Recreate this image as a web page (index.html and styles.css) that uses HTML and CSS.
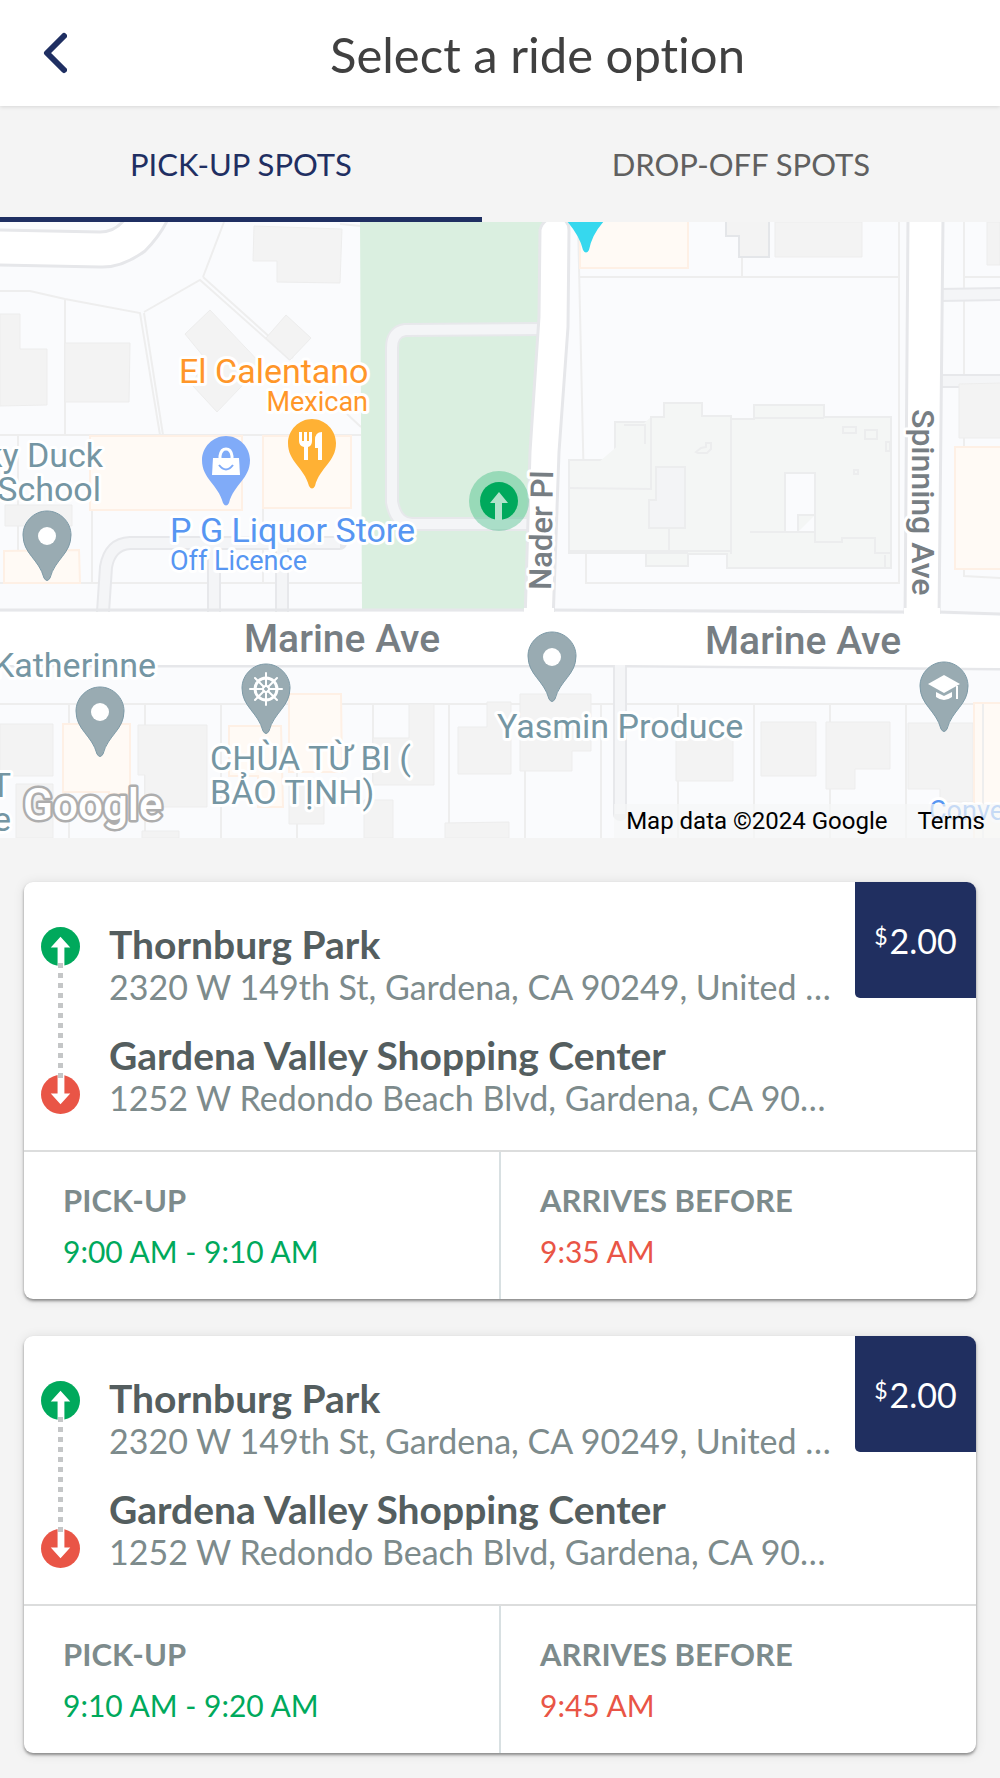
FILE: index.html
```html
<!DOCTYPE html>
<html lang="en">
<head>
<meta charset="UTF-8">
<meta name="viewport" content="width=device-width, initial-scale=1.0">
<title>Select a ride option</title>
<link rel="stylesheet" href="styles.css">
</head>
<body>

<!-- Shared icons -->
<svg class="sprite" aria-hidden="true">
    <symbol id="arrow-up" viewBox="0 0 40 40">
        <circle cx="20" cy="20" r="20"/>
        <path fill="#fff" d="M20 10 L30 21 H24 V40 H17 V21 H10 Z"/>
    </symbol>
    <symbol id="arrow-down" viewBox="0 0 40 40">
        <circle cx="20" cy="20" r="20"/>
        <path fill="#fff" d="M20 30 L30 19 H24 V0 H17 V19 H10 Z"/>
    </symbol>
    <symbol id="pin" viewBox="-25 -25 50 75" overflow="visible">
        <path d="M0-24C13-24 24-13 24 0C24 19 8 24 3 43Q0 48-3 43C-8 24-24 19-24 0C-24-13-13-24 0-24Z"/>
    </symbol>
</svg>

<header class="header">
    <button class="back" aria-label="Back">
        <svg viewBox="0 0 24 42" width="24" height="42"><path d="M21 4 L4 21 L21 38"/></svg>
    </button>
    <h1>Select a ride option</h1>
</header>

<nav class="tabs">
    <button class="tab active">PICK-UP SPOTS</button>
    <button class="tab">DROP-OFF SPOTS</button>
</nav>

<section class="map">
    <svg class="map-canvas" viewBox="0 0 1000 616" role="img" aria-label="Map of pick-up spots">
        <rect width="1000" height="616" fill="#fafbfd"/>

        <!-- Lots -->
        <g class="lot">
            <path d="M0 69H30L65 77L140 91L160 213M144 91L163 213M144 90L200 58L290 138M203 55L293 136M203 55L224 0M65 77V213M0 213H361M18 213V361M92 288V361M263 213V361M0 361H362M347 192L361 205"/>
            <path d="M340 2L361 4M578 0L584 268M580 55H899M899 0V361H586V331M742 35V55M964 0V225M964 55H1000M955 347H964V354L1000 356"/>
            <path d="M0 482H1000M69 482V616M145 482V616M221 482V616M297 482V616M373 482V616M449 482V616M525 482V616M601 482V616M678 482V616M754 482V616M830 482V616M906 482V616"/>
        </g>

        <!-- Buildings -->
        <g class="building">
            <path d="M254 4L342 7L340 61L277 60V39L253 39Z"/>
            <path d="M0 92H20V127H47V183L0 184Z"/>
            <path d="M65 121H130L129 180H65Z"/>
            <path d="M185 112L210 88L262 143L217 190L193 164L203 134Z"/>
            <path d="M266 116L286 93L311 116L290 138Z"/>
            <path d="M5 283H72V304H5Z"/>
            <path d="M775 0H862V35H775Z"/>
            <path d="M987 0H1000V43H987Z"/>
            <path d="M0 502H53V554H0Z"/>
            <path d="M138 503H207V585H145V553H138Z"/>
            <path d="M16 562H53V616H16Z"/>
            <path d="M289 560H324V602H289Z"/>
            <path d="M142 609H179V616H142Z"/>
            <path d="M373 516H409V482H434V563H373Z"/>
            <path d="M458 505H487V480H511V552H458Z"/>
            <path d="M520 472H591V529H572V549H520Z"/>
            <path d="M364 578H393V616H364Z"/>
            <path d="M445 601L509 600V616H445Z"/>
            <path d="M676 510H733V559H676Z"/>
            <path d="M761 500H816V554H761Z"/>
            <path d="M826 500H890V547H855V567H826Z"/>
            <path d="M908 501H973V580H940V567H908Z"/>
            <path d="M726 0V14H739V35H769V0" stroke="#e4e6e9" stroke-width="2"/>
        </g>
        <g class="shop">
            <path d="M90 214H242V288H90Z"/>
            <path d="M263 214H351V286H263Z"/>
            <path d="M4 329L79 328L80 361H4Z"/>
            <path d="M580 -2H688V46H580Z"/>
            <path d="M955 225H1002V347H955Z"/>
            <path d="M63 502H130V572H109V570H63Z"/>
            <path d="M229 504H281L283 585H258V554H229Z"/>
            <path d="M289 472H341L342 550H289Z"/>
            <path d="M974 481H1002V618H974Z"/>
        </g>
        <path class="lot" d="M983 482V616"/>

        <!-- School -->
        <g class="campus">
            <path d="M569 238H615V200H651V195H664V181H702V194H731V197H754V183H824V195H891V346H727V332H688V344H646V331H569Z"/>
            <path d="M569 266L651 267V195M731 197V332M754 196H824M624 203H645V222M646 331H688M569 329H731M750 310H815V320H842V316H875V331H890M885 333V345M669 282V332M649 285H669V305H649ZM651 293H659V300H651ZM843 205H856V211H843ZM865 208H877V217H865ZM886 220H890V229H886ZM854 248H858V252H854ZM696 230L701 226L706 225V221H711V227L707 231H698Z"/>
            <path d="M656 245H685V306H649V278H656Z" fill="#f3f4f6"/>
            <path d="M785 251H815V310H785Z" fill="#fafbfd"/>
            <path d="M798 310V293H815"/>
        </g>

        <!-- Park -->
        <path d="M360 0H546L538 120L526 388H362Z" fill="#daefe0"/>

        <!-- Driveways -->
        <g class="drive-edge">
            <path id="drives" d="M103 390L106 345Q110 322 130 321H340M214 325V390M282 325V390M542 107L405 108Q392 110 392 126V280Q396 302 412 302H530M620 443V592M940 73L1002 72M940 159H1002"/>
        </g>
        <use href="#drives" class="drive"/>
        <path class="building" d="M959 162L1002 161V216H959Z"/>

        <!-- Streets -->
        <g class="street">
            <path d="M-3 8L100 10Q115 10 125 -3H168Q160 14 145 29Q122 46 100 45L-3 43Z"/>
            <path d="M540 8Q542 -1 551 -4H562Q569 0 569 8L568 105L559 230L553 400H525L530 230L539 95Z"/>
            <path d="M908 -3H943L939 400H905Z"/>
            <path d="M-3 388H525M553 388L905 390M939 390L1003 392M1003 447L626 444M614 444H-3" fill="none"/>
        </g>
        <path fill="#fff" d="M0 390H524V386H554V390L904 392V386H940V392L1000 394V446L626 443H0Z"/>

        <!-- Labels -->
        <g class="label">
            <g fill="#ff9629">
                <text x="179" y="161" font-size="34">El Calentano</text>
                <text x="368" y="189" font-size="27" text-anchor="end">Mexican</text>
            </g>
            <g fill="#5796f2">
                <text x="170" y="320" font-size="34">P G Liquor Store</text>
                <text x="170" y="348" font-size="27">Off Licence</text>
                <text x="929" y="598" font-size="27">Convenience</text>
            </g>
            <g fill="#7596a3" font-size="34">
                <text x="103" y="245" text-anchor="end">ky Duck</text>
                <text x="101" y="279" text-anchor="end">School</text>
                <text x="156" y="455" text-anchor="end">Katherinne</text>
                <text x="11" y="575" text-anchor="end">T</text>
                <text x="11" y="609" text-anchor="end">e</text>
                <text x="210" y="548">CHÙA TỪ BI (</text>
                <text x="210" y="582">BẢO TỊNH)</text>
                <text x="497" y="516">Yasmin Produce</text>
            </g>
            <g fill="#777e83" font-weight="500">
                <text x="244" y="430" font-size="39">Marine Ave</text>
                <text x="705" y="432" font-size="39">Marine Ave</text>
                <text transform="translate(551 368) rotate(-89)" font-size="31">Nader Pl</text>
                <text transform="translate(912 187) rotate(90)" font-size="32">Spinning Ave</text>
            </g>
        </g>

        <!-- Place pins -->
        <path d="M566 -2H605Q592 12 589 28Q586 33 583 28Q580 14 566 -2Z" fill="#36d8ee"/>
        <g fill="#99abb2" stroke="#7d9aa7" stroke-width="1">
            <use href="#pin" x="22" y="288" width="50" height="75"/>
            <use href="#pin" x="75" y="464" width="50" height="75"/>
            <use href="#pin" x="241" y="441" width="50" height="75"/>
            <use href="#pin" x="527" y="409" width="50" height="75"/>
            <use href="#pin" x="919" y="439" width="50" height="75"/>
        </g>
        <use href="#pin" x="201" y="213" width="50" height="75" fill="#80abf8"/>
        <use href="#pin" x="287" y="196" width="50" height="75" fill="#ffb134"/>
        <g fill="#fff">
            <circle cx="47" cy="314" r="9"/>
            <circle cx="100" cy="490" r="9"/>
            <circle cx="552" cy="435" r="9"/>
            <path d="M213 236H239L240 253H212Z"/>
            <path d="M220 236V234Q221 227 226 227Q231 227 232 234V236" fill="none" stroke="#fff" stroke-width="3"/>
            <path d="M219 243Q226 252 233 243" fill="none" stroke="#80abf8" stroke-width="2"/>
            <path d="M299 210H302V219H304V210H307V219H309V210H312V219Q312 224 308 225V238H304V225Q299 224 299 219Z"/>
            <path d="M322 210V238H318V226H315V218Q315 210 322 210Z"/>
            <path d="M928 462L944 453L960 462L944 471Z"/>
            <path d="M936 470L944 474L952 470V475Q944 481 936 475ZM956 464H958V477H956Z"/>
        </g>
        <g fill="none" stroke="#fff" stroke-width="3" stroke-linecap="round">
            <circle cx="266" cy="467" r="11"/>
            <circle cx="266" cy="467" r="3" stroke-width="2"/>
            <path stroke-width="2" d="M266 451V464M266 470V483M250 467H263M269 467H282M255 456L264 465M268 469L277 478M277 456L268 465M264 469L255 478"/>
        </g>

        <!-- Pick-up spot -->
        <circle cx="499" cy="279" r="30" fill="#00a95c" fill-opacity="0.3"/>
        <circle cx="499" cy="279" r="19" fill="#00a95c"/>
        <path d="M499 270L508 281H502V298H495V281H490Z" fill="#b3e3cb"/>

        <text class="logo" x="23" y="598">Google</text>
    </svg>
    <div class="attribution">
        <span>Map data ©2024 Google</span>
        <a href="#">Terms</a>
    </div>
</section>

<main class="rides">
    <article class="ride">
        <div class="route">
            <div class="route-line">
                <svg class="from" width="39" height="39"><use href="#arrow-up"/></svg>
                <span class="dots"></span>
                <svg class="to" width="39" height="39"><use href="#arrow-down"/></svg>
            </div>
            <div class="stops">
                <div class="stop">
                    <h2>Thornburg Park</h2>
                    <p>2320 W 149th St, Gardena, CA 90249, United States</p>
                </div>
                <div class="stop">
                    <h2>Gardena Valley Shopping Center</h2>
                    <p>1252 W Redondo Beach Blvd, Gardena, CA 90247, United States</p>
                </div>
            </div>
            <div class="price"><span class="currency">$</span>2.00</div>
        </div>
        <div class="times">
            <div class="time">
                <h3>PICK-UP</h3>
                <p class="pickup">9:00 AM - 9:10 AM</p>
            </div>
            <div class="time">
                <h3>ARRIVES BEFORE</h3>
                <p class="arrival">9:35 AM</p>
            </div>
        </div>
    </article>

    <article class="ride">
        <div class="route">
            <div class="route-line">
                <svg class="from" width="39" height="39"><use href="#arrow-up"/></svg>
                <span class="dots"></span>
                <svg class="to" width="39" height="39"><use href="#arrow-down"/></svg>
            </div>
            <div class="stops">
                <div class="stop">
                    <h2>Thornburg Park</h2>
                    <p>2320 W 149th St, Gardena, CA 90249, United States</p>
                </div>
                <div class="stop">
                    <h2>Gardena Valley Shopping Center</h2>
                    <p>1252 W Redondo Beach Blvd, Gardena, CA 90247, United States</p>
                </div>
            </div>
            <div class="price"><span class="currency">$</span>2.00</div>
        </div>
        <div class="times">
            <div class="time">
                <h3>PICK-UP</h3>
                <p class="pickup">9:10 AM - 9:20 AM</p>
            </div>
            <div class="time">
                <h3>ARRIVES BEFORE</h3>
                <p class="arrival">9:45 AM</p>
            </div>
        </div>
    </article>
</main>

</body>
</html>
```
FILE: styles.css
```css
* {
    box-sizing: border-box;
}

body {
    margin: 0;
    font-family: Lato, "Liberation Sans", sans-serif;
    font-variant-ligatures: none;
    background-color: #f4f4f4;
    color: #545e5f;
}

h1, h2, h3, p {
    margin: 0;
}

button {
    font-family: inherit;
    border: none;
    background: none;
    padding: 0;
    cursor: pointer;
}

.sprite {
    position: absolute;
    width: 0;
    height: 0;
}

/* Header */
.header {
    display: flex;
    align-items: center;
    height: 106px;
    padding: 0 4px 0 43px;
    background-color: #fff;
    box-shadow: 0 1px 4px rgba(0, 0, 0, 0.12);
}

.back {
    width: 36px;
    height: 42px;
    text-align: left;
}

.back svg {
    display: block;
    fill: none;
    stroke: #1f2f62;
    stroke-width: 6;
    stroke-linecap: round;
    stroke-linejoin: round;
}

.header h1 {
    flex: 1;
    padding-top: 2px;
    text-align: center;
    font-size: 49px;
    font-weight: 400;
    line-height: 60px;
    color: #404040;
}

/* Tabs */
.tabs {
    display: flex;
    height: 116px;
}

.tab {
    flex: 1 1 auto;
    padding-top: 4px;
    border-bottom: 5px solid transparent;
    font-size: 31px;
    color: #606060;
}

.tab.active {
    border-bottom-color: #1f2f62;
    color: #1f2f62;
}

/* Map */
.map {
    position: relative;
    overflow: hidden;
}

.map-canvas {
    display: block;
    width: 100%;
    height: auto;
    font-family: Roboto, sans-serif;
}

.lot {
    fill: none;
    stroke: #eeeeee;
    stroke-width: 2;
}

.building {
    fill: #f3f3f3;
    stroke: #ededed;
    stroke-width: 1;
}

.shop {
    fill: #fffaf5;
    stroke: #fef0e5;
    stroke-width: 2;
}

.campus {
    fill: #f4f6f5;
    stroke: #ecedee;
    stroke-width: 2;
}

.drive-edge {
    fill: none;
    stroke: #e7e8eb;
    stroke-width: 14;
    stroke-linecap: round;
}

.drive {
    fill: none;
    stroke: #f4f5f7;
    stroke-width: 10;
}

.street {
    fill: #fff;
    stroke: #e6e7ea;
    stroke-width: 3;
}

.label {
    stroke: #fff;
    stroke-width: 6;
    stroke-linejoin: round;
    paint-order: stroke;
}

.logo {
    font-size: 44px;
    font-weight: 500;
    fill: #fff;
    stroke: #adadad;
    stroke-width: 5;
    stroke-linejoin: round;
    paint-order: stroke;
}

.attribution {
    position: absolute;
    right: 0;
    bottom: 0;
    display: flex;
    gap: 30px;
    padding: 0 15px 0 12px;
    font-family: Roboto, sans-serif;
    font-size: 24px;
    line-height: 34px;
    color: #000;
    background-color: rgba(245, 246, 246, 0.7);
}

.attribution a {
    color: inherit;
    text-decoration: none;
}

/* Ride cards */
.rides {
    display: flex;
    flex-direction: column;
    gap: 37px;
    padding: 44px 24px 25px;
}

.ride {
    border-radius: 9px;
    background-color: #fff;
    box-shadow: 0 2px 3px rgba(0, 0, 0, 0.4), 0 1px 12px rgba(0, 0, 0, 0.1);
}

.route {
    display: flex;
    height: 270px;
    border-bottom: 2px solid #dcdddd;
}

.route-line {
    display: flex;
    flex-direction: column;
    align-items: center;
    width: 39px;
    margin: 45px 29px 36px 17px;
}

.route-line svg {
    flex: none;
}

.from {
    fill: #00a95c;
}

.to {
    fill: #e95546;
}

.dots {
    flex: 1;
    width: 5px;
    margin: -3px 0;
    z-index: 1;
    background: repeating-linear-gradient(#c4c6c7 0 5px, transparent 5px 10px);
}

.stops {
    flex: 1;
    min-width: 0;
    padding-top: 39px;
}

.stop {
    margin-bottom: 26px;
}

.stop h2 {
    font-size: 39px;
    font-weight: 700;
    line-height: 46px;
}

.stop p {
    overflow: hidden;
    font-size: 34px;
    line-height: 39px;
    color: #7d8b8c;
    white-space: nowrap;
    text-overflow: ellipsis;
}

.price {
    display: flex;
    justify-content: center;
    align-items: center;
    width: 121px;
    height: 116px;
    margin-left: 19px;
    border-radius: 0 9px 0 5px;
    font-size: 34px;
    color: #fff;
    background-color: #202f60;
}

.currency {
    margin: 0 2px 8px 0;
    font-size: 23px;
}

.times {
    display: flex;
}

.time {
    flex: 1;
    padding: 28px 39px;
}

.time + .time {
    border-left: 2px solid #d8e0e2;
}

.time h3 {
    font-size: 31px;
    font-weight: 700;
    line-height: 40px;
    color: #7d8b8c;
}

.time p {
    margin-top: 11px;
    font-size: 30px;
    line-height: 40px;
}

.pickup {
    color: #00a95c;
}

.arrival {
    color: #e95546;
}
```
